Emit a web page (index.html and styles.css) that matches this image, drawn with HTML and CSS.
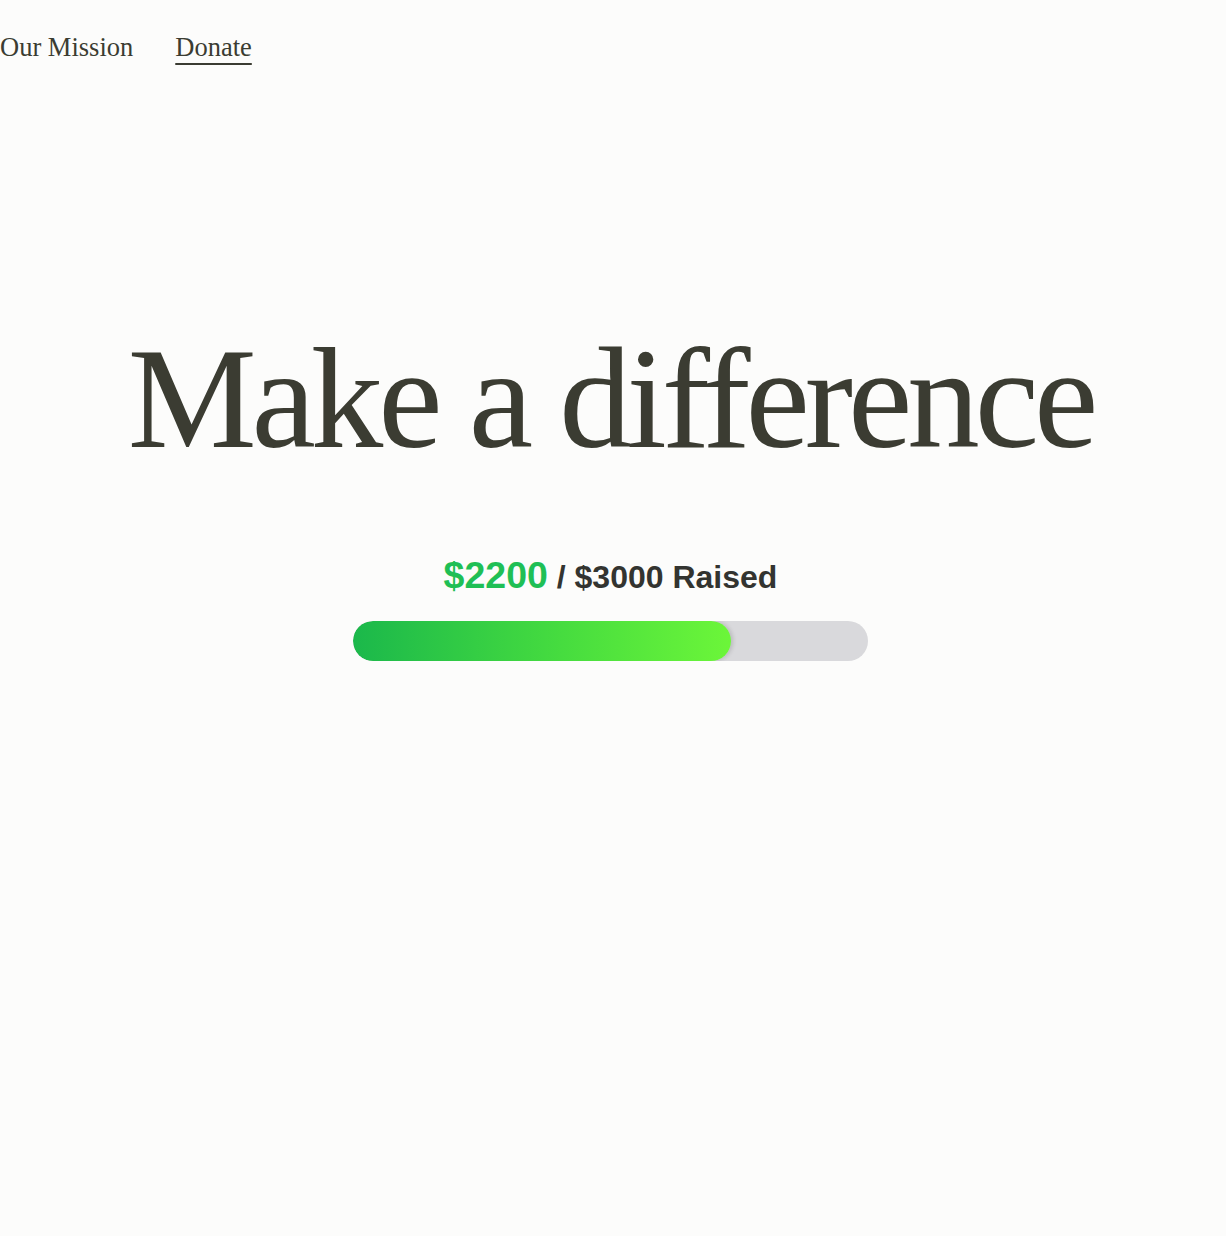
FILE: index.html
```html
<!DOCTYPE html>
<html lang="en">
<head>
<meta charset="utf-8">
<title>Make a difference</title>
<link rel="stylesheet" href="styles.css">
</head>
<body>
<nav class="nav">
  <a class="nav-link" href="#">Our Mission</a>
  <a class="nav-link nav-link-active" href="#">Donate</a>
</nav>
<main class="hero">
  <h1 class="headline">Make a difference</h1>
  <div class="goal">
    <p class="goal-text"><span class="goal-raised">$2200</span> / $3000 Raised</p>
    <div class="bar">
      <div class="bar-fill" style="width: 73.33%"></div>
    </div>
  </div>
</main>
</body>
</html>
```

FILE: styles.css
```css
html, body {
  margin: 0;
  padding: 0;
}
body {
  background: #fcfcfb;
  color: #3b3c32;
  font-family: "Liberation Serif", "Times New Roman", serif;
  min-height: 1236px;
}
.nav {
  display: flex;
  gap: 42px;
  padding: 29px 0 0 0;
  height: 50px;
}
.nav-link {
  font-size: 26.5px;
  line-height: 36px;
  color: #3b3c32;
  text-decoration: none;
}
.nav-link-active {
  text-decoration: underline;
  text-decoration-thickness: 1.5px;
  text-underline-offset: 7px;
}
.hero {
  display: flex;
  flex-direction: column;
  align-items: center;
  padding: 247px 5px 0 0;
}
.headline {
  margin: 0;
  font-weight: normal;
  font-size: 145px;
  line-height: 1;
  letter-spacing: -0.035em;
  color: #3b3c32;
}
.goal {
  display: flex;
  flex-direction: column;
  align-items: center;
  margin-top: 84px;
}
.goal-text {
  margin: 0;
  font-family: "Liberation Sans", Arial, sans-serif;
  font-weight: bold;
  font-size: 32px;
  line-height: 40px;
  color: #333430;
}
.goal-raised {
  color: #1fbf55;
  font-size: 37.5px;
}
.bar {
  margin-top: 24px;
  width: 515px;
  height: 40px;
  border-radius: 20px;
  background: #d9d9dc;
  overflow: hidden;
}
.bar-fill {
  height: 100%;
  border-radius: 20px;
  background: linear-gradient(90deg, #1bb84b 0%, #46dc3f 55%, #6cf639 100%);
  box-shadow: 2px 0 4px rgba(0, 0, 0, 0.15);
}
```
